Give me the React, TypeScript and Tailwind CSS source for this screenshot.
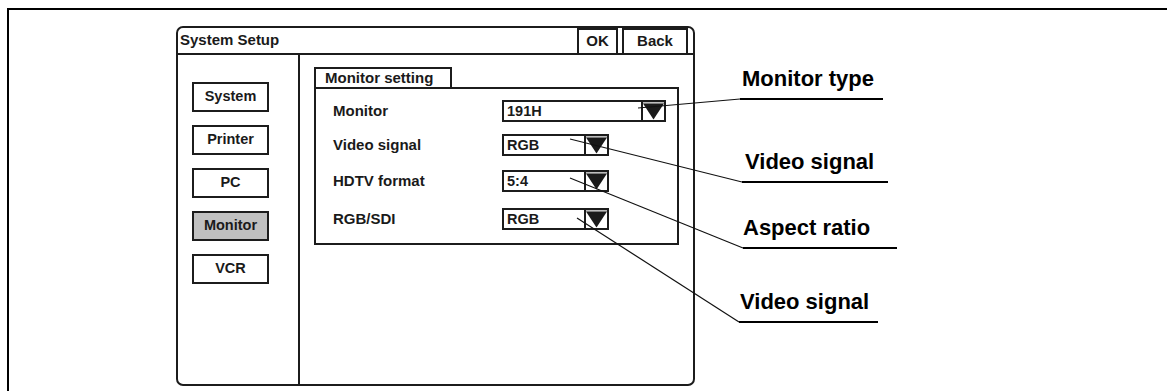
const font = { fontFamily: '"Liberation Sans", Arial, Helvetica, sans-serif' };

const sideItems = ['System', 'Printer', 'PC', 'Monitor', 'VCR'];

type Row = { label: string; value: string; wide?: boolean; mt: string };

const rows: Row[] = [
  { label: 'Monitor', value: '191H', wide: true, mt: 'mt-[11px]' },
  { label: 'Video signal', value: 'RGB', mt: 'mt-[11px]' },
  { label: 'HDTV format', value: '5:4', mt: 'mt-[14px]' },
  { label: 'RGB/SDI', value: 'RGB', mt: 'mt-[15px]' },
];

const callouts = [
  { text: 'Monitor type', box: 'mt-[57px] ml-[1px] w-[143px]', pad: 'pl-[2px]' },
  { text: 'Video signal', box: 'mt-[50px] ml-[3px] w-[146px]', pad: 'pl-[3px]' },
  { text: 'Aspect ratio', box: 'mt-[33px] ml-[4px] w-[154px]', pad: 'pl-0' },
  { text: 'Video signal', box: 'mt-[41px] ml-0 w-[139px]', pad: 'pl-[1px]' },
];

function Arrow() {
  return (
    <div className="flex h-full w-[23px] items-start border-l-2 border-[#1c1c1c] bg-[#d9d9d9]">
      <svg width="21" height="18" viewBox="0 0 21 18" className="block">
        <rect x="0" y="0" width="21" height="18" fill="#ffffff" />
        <rect x="0" y="0" width="21" height="1.5" fill="#bdbdbd" />
        <polygon points="0,1.5 21,1.5 10.5,17.5" fill="#1a1a1a" />
      </svg>
    </div>
  );
}

function Dropdown({ value, wide }: { value: string; wide?: boolean }) {
  return (
    <div
      className={`flex h-[22px] border-2 border-[#1c1c1c] bg-white ${wide ? 'w-[164px]' : 'w-[107px]'}`}
    >
      <div className="flex flex-1 items-center pl-[3px] text-[14.5px] font-bold leading-none text-[#1a1a1a]">
        {value}
      </div>
      <Arrow />
    </div>
  );
}

export default function App() {
  return (
    <div className="relative h-[391px] w-[1167px] overflow-hidden bg-white text-[#1a1a1a]" style={font}>
      <div className="ml-[7px] mt-[8px] flex h-[383px] w-[1160px] border-l-2 border-t-2 border-black">
        {/* setup window */}
        <div className="ml-[167px] mt-[16px] flex h-[360px] w-[519px] flex-col rounded-[7px] border-2 border-[#1c1c1c]">
          <div className="flex h-[27px] items-start justify-between border-b-2 border-[#1c1c1c]">
            <div className="flex h-[25px] items-center pl-[2px] text-[15px] font-bold">System Setup</div>
            <div className="relative mr-[5px] flex gap-[4px]">
              <div className="flex h-[27px] w-[41px] items-center justify-center border-2 border-[#1c1c1c] bg-white text-[15px] font-bold">
                OK
              </div>
              <div className="flex h-[27px] w-[66px] items-center justify-center border-2 border-[#1c1c1c] bg-white text-[15px] font-bold">
                Back
              </div>
            </div>
          </div>

          <div className="flex flex-1">
            <div className="flex w-[122px] flex-col gap-[13px] border-r-2 border-[#1c1c1c] pl-[14px] pt-[27px]">
              {sideItems.map((item) => (
                <div
                  key={item}
                  className={`flex h-[30px] w-[77px] items-center justify-center border-2 border-[#1c1c1c] text-[14.5px] font-bold ${
                    item === 'Monitor' ? 'bg-[#c0c0c0]' : 'bg-white'
                  }`}
                >
                  {item}
                </div>
              ))}
            </div>

            <div className="flex-1 pl-[14px] pt-[12px]">
              <div className="flex h-[20px] w-[138px] items-center border-2 border-b-0 border-[#1c1c1c] pl-[9px] text-[15px] font-bold">
                Monitor setting
              </div>
              <div className="h-[158px] w-[365px] border-2 border-[#1c1c1c]">
                {rows.map((row) => (
                  <div key={row.label} className={`flex items-center pl-[17px] ${row.mt}`}>
                    <div className="w-[169px] text-[15px] font-bold">{row.label}</div>
                    <Dropdown value={row.value} wide={row.wide} />
                  </div>
                ))}
              </div>
            </div>
          </div>
        </div>

        {/* callouts */}
        <div className="ml-[44px] flex flex-col">
          {callouts.map((c, i) => (
            <div key={i} className={`border-b-2 border-black pb-[7px] ${c.box}`}>
              <div className={`text-[22px] font-bold leading-[24px] text-black ${c.pad}`}>{c.text}</div>
            </div>
          ))}
        </div>
      </div>

      <svg className="pointer-events-none absolute left-0 top-0" width="1167" height="391">
        <g stroke="#111" strokeWidth="1.2">
          <line x1="638" y1="108" x2="740" y2="99" />
          <line x1="570" y1="139" x2="742" y2="182" />
          <line x1="570" y1="178" x2="743" y2="248" />
          <line x1="577" y1="218" x2="739" y2="322" />
        </g>
      </svg>
    </div>
  );
}
